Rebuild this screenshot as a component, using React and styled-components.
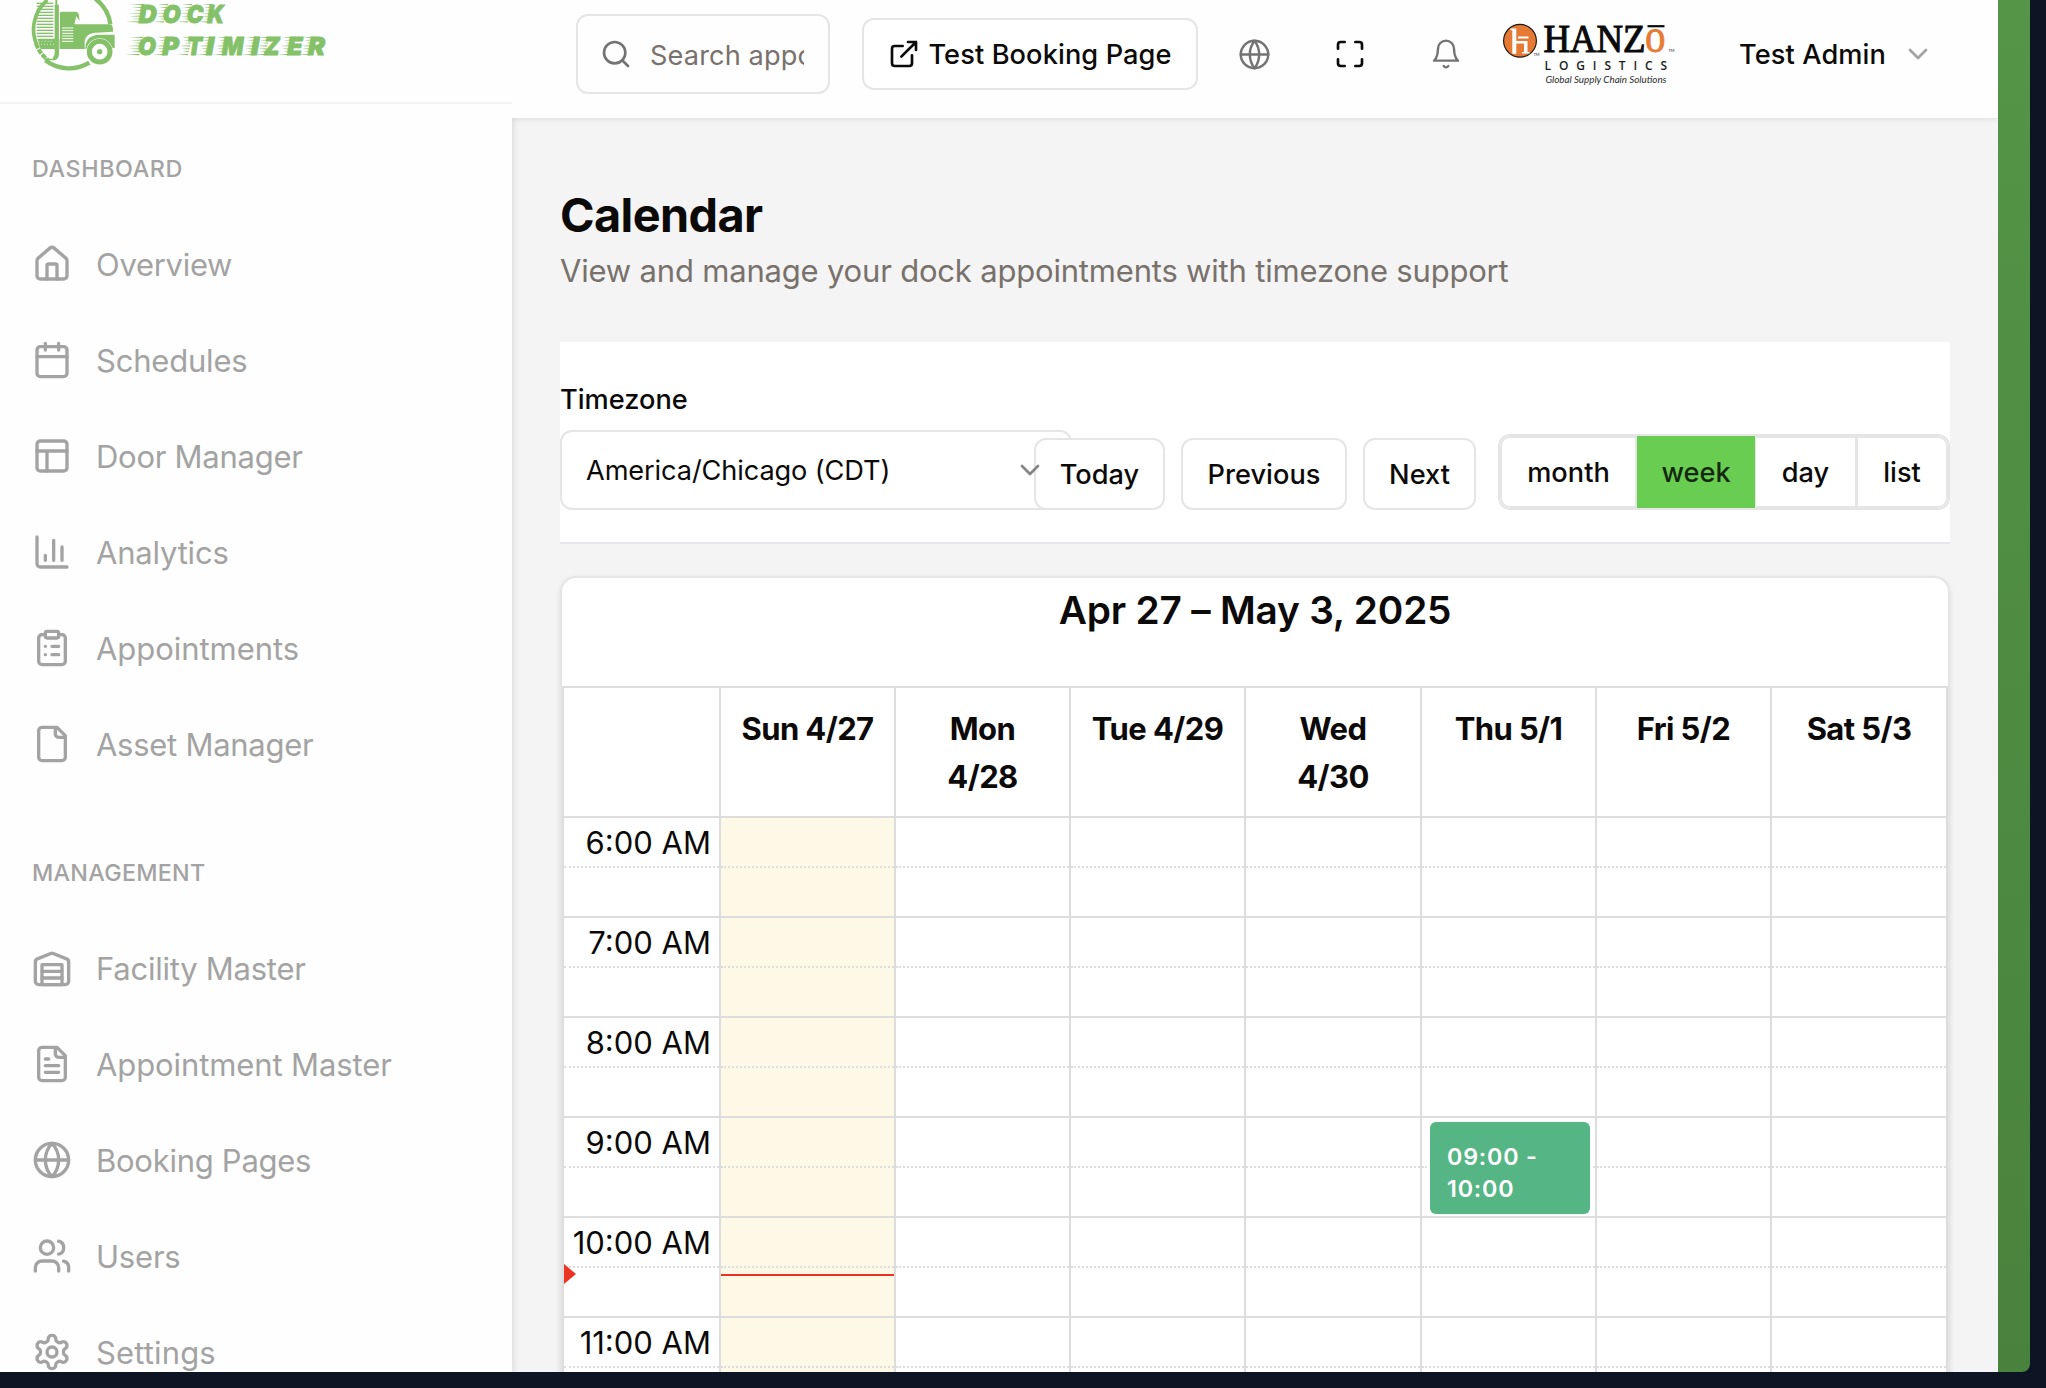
import React from 'react';
import styled, { createGlobalStyle, css } from 'styled-components';

const GlobalStyle = createGlobalStyle`
  *, *::before, *::after { box-sizing: border-box; }
  html, body { margin: 0; padding: 0; overflow: hidden; }
  body { font-family: Inter, "Liberation Sans", sans-serif; color: #0c0a09; background: #0d1423; }
  button, input { font-family: inherit; }
`;

const line = '#dddddd';
const edge = '#e5e5e5';

/* ---------- frame ---------- */

const Desktop = styled.div`
  width: 2046px;
  height: 1388px;
  padding: 0 16px 16px 0;
  background: #0d1423;
`;

const Window = styled.div`
  height: 1372px;
  padding-right: 32px;
  overflow: hidden;
  border-bottom-right-radius: 8px;
  background: linear-gradient(to bottom, #549547, #49823c);
`;

const Shell = styled.div`
  display: flex;
  height: 1372px;
  background: #f4f4f4;
  overflow: hidden;
`;

/* ---------- sidebar ---------- */

const Sidebar = styled.aside`
  flex: 0 0 512px;
  height: 100%;
  background: #fefefe;
  box-shadow: 2px 0 6px rgba(0, 0, 0, 0.1);
  z-index: 1;
`;

const Brand = styled.div`
  height: 104px;
  padding-left: 24px;
  border-bottom: 2px solid #f3f3f3;
`;

const Nav = styled.nav`
  padding-top: 41px;
`;

const SectionLabel = styled.div`
  height: 48px;
  line-height: 48px;
  margin: ${(p) => (p.$spaced ? '57px' : '0')} 0 23px;
  padding-left: 32px;
  font-size: 23.3px;
  font-weight: 500;
  letter-spacing: ${(p) => p.$track}px;
  color: #a3a3a3;
`;

const NavItem = styled.a`
  display: flex;
  align-items: center;
  gap: 24px;
  height: 96px;
  padding-left: 32px;
  color: #a3a3a3;
  font-size: 31px;
  letter-spacing: ${(p) => p.$track}px;
  svg { display: block; }
`;

/* ---------- header ---------- */

const Main = styled.div`
  flex: 1;
  min-width: 0;
  display: flex;
  flex-direction: column;
`;

const Header = styled.header`
  display: flex;
  align-items: center;
  flex: 0 0 118px;
  padding: 0 0 10px 64px;
  background: #fefefe;
  box-shadow: 0 1px 6px rgba(0, 0, 0, 0.1);
  clip-path: inset(0 0 -12px 0);
  position: relative;
  z-index: 2;
`;

const SearchBox = styled.label`
  display: flex;
  align-items: center;
  gap: 18px;
  width: 254px;
  height: 80px;
  padding: 0 24px 0 22px;
  border: 2px solid ${edge};
  border-radius: 12px;
  color: #737373;
  svg { flex: none; }
`;

const SearchText = styled.span`
  flex: 1;
  min-width: 0;
  overflow: hidden;
  white-space: nowrap;
  padding-top: 3px;
  line-height: 40px;
  font-size: 27.2px;
  letter-spacing: 0.1px;
  color: #78716c;
`;

const outlined = css`
  display: flex;
  align-items: center;
  justify-content: center;
  height: 72px;
  padding: 0;
  border: 2px solid ${edge};
  border-radius: 12px;
  background: #fff;
  color: #0c0a09;
  font-size: 27.2px;
  font-weight: 500;
  white-space: nowrap;
`;

const BookingButton = styled.button`
  ${outlined}
  gap: 8px;
  width: 336px;
  margin-left: 32px;
  letter-spacing: 0.1px;
`;

const IconRow = styled.div`
  display: flex;
  gap: 16px;
  margin: 0 16px;
`;

const IconButton = styled.button`
  display: grid;
  place-items: center;
  width: 80px;
  height: 72px;
  padding: 0;
  border: 0;
  background: transparent;
  color: ${(p) => (p.$strong ? '#0c0a09' : '#737373')};
`;

const Account = styled.div`
  display: flex;
  align-items: center;
  gap: 16px;
  margin-left: 63px;
  font-size: 27.2px;
  font-weight: 500;
  letter-spacing: 0.1px;
  white-space: nowrap;
  svg { color: #a3a3a3; }
`;

const AccountName = styled.span`
  width: 147px;
`;

/* ---------- page ---------- */

const Page = styled.main`
  padding: 64px 48px 0;
`;

const PageTitle = styled.h1`
  margin: 0;
  height: 66px;
  line-height: 66px;
  font-size: 46.8px;
  font-weight: 700;
  letter-spacing: -0.6px;
`;

const PageLead = styled.p`
  margin: 0;
  height: 46px;
  line-height: 46px;
  font-size: 31px;
  letter-spacing: -0.19px;
  color: #78716c;
`;

const Toolbar = styled.section`
  display: flex;
  align-items: flex-end;
  height: 202px;
  margin-top: 48px;
  padding-bottom: 32px;
  background: #fff;
  border-bottom: 2px solid #e5e7eb;
`;

const ZoneField = styled.div`
  flex: 0 0 474px;
  min-width: 0;
  width: 474px;
  display: flex;
  flex-direction: column;
  gap: 10px;
`;

const ZoneLabel = styled.label`
  line-height: 40px;
  font-size: 27.2px;
  font-weight: 500;
`;

const ZoneSelect = styled.div`
  display: flex;
  align-items: center;
  justify-content: space-between;
  width: 512px;
  height: 80px;
  padding: 0 24px;
  border: 2px solid ${edge};
  border-radius: 12px;
  background: #fff;
  font-size: 27.2px;
  letter-spacing: -0.12px;
  svg { position: relative; z-index: 1; color: #858585; }
`;

const Pager = styled.div`
  display: flex;
  flex: none;
  gap: 16px;
`;

const PagerButton = styled.button`
  ${outlined}
  flex: none;
  width: ${(p) => p.$w}px;
`;

const ViewSwitch = styled.div`
  display: flex;
  flex: none;
  width: 452px;
  height: 76px;
  margin-left: 22px;
  border: 2px solid ${edge};
  border-radius: 12px;
  overflow: hidden;
`;

const ViewButton = styled.button`
  ${outlined}
  flex: none;
  width: ${(p) => p.$w}px;
  border-radius: ${(p) => (p.$first ? '10px 0 0 10px' : p.$last ? '0 10px 10px 0' : '0')};
  border-left-width: ${(p) => (p.$first || p.$active ? 2 : 1)}px;
  ${(p) => p.$active && css`
    background: #69cd51;
    border-color: #69cd51;
    color: #14290f;
  `}
`;

/* ---------- calendar ---------- */

const CalendarCard = styled.section`
  margin-top: 32px;
  height: 900px;
  border: 2px solid ${edge};
  border-radius: 16px;
  background: #fff;
  box-shadow: 0 2px 5px rgba(0, 0, 0, 0.1);
`;

const RangeTitle = styled.h2`
  margin: 0;
  height: 108px;
  padding-top: 2px;
  line-height: 60px;
  text-align: center;
  font-size: 38.8px;
  font-weight: 600;
  letter-spacing: -0.2px;
`;

const columns = css`
  display: grid;
  grid-template-columns: 155px 175px 175px 175px 176px 175px 175px minmax(0, 1fr);
`;

const Table = styled.div`
  border: solid ${line};
  border-width: 2px 2px 0 2px;
`;

const DayHeads = styled.div`
  ${columns}
  height: 128px;
`;

const DayHead = styled.div`
  padding: 17px 17px 0;
  border-left: 2px solid ${line};
  text-align: center;
  font-size: 31px;
  font-weight: 700;
  line-height: 48px;
  letter-spacing: -0.6px;
`;

const Corner = styled.div``;

const Grid = styled.div`
  ${columns}
`;

const TimeAxis = styled.div`
  position: relative;
`;

const DayColumn = styled.div`
  position: relative;
  border-left: 2px solid ${line};
  background: ${(p) => (p.$today ? '#fef9e6' : 'transparent')};
`;

const Slot = styled.div`
  height: 50px;
  border-top: 2px ${(p) => (p.$half ? 'dotted' : 'solid')} ${line};
  padding-right: 8px;
  line-height: 49px;
  text-align: right;
  white-space: nowrap;
  font-size: 31px;
`;

const NowArrow = styled.div`
  position: absolute;
  left: 0;
  top: 448px;
  border-style: solid;
  border-width: 10px 0 10px 12px;
  border-color: transparent transparent transparent #ea3323;
`;

const NowLine = styled.div`
  position: absolute;
  left: 0;
  right: 0;
  top: 458px;
  height: 2px;
  background: #ea3323;
`;

const Event = styled.div`
  position: absolute;
  left: 8px;
  right: 5px;
  top: 306px;
  height: 92px;
  padding: 19px 17px 0;
  border-radius: 6px;
  background: #55b584;
  box-shadow: 0 0 0 2px #fff;
  color: #fff;
  font-size: 23.3px;
  font-weight: 600;
  line-height: 32px;
  letter-spacing: 0.8px;
`;

/* ---------- icons ---------- */

const Icon = ({ size = 40, width = 2, children, cap = 'round' }) => (
  <svg width={size} height={size} viewBox="0 0 24 24" fill="none" stroke="currentColor"
    strokeWidth={width} strokeLinecap={cap} strokeLinejoin="round">
    {children}
  </svg>
);

const icons = {
  house: <><path d="M15 21v-8a1 1 0 0 0-1-1h-4a1 1 0 0 0-1 1v8" /><path d="M3 10a2 2 0 0 1 .709-1.528l7-5.999a2 2 0 0 1 2.582 0l7 5.999A2 2 0 0 1 21 10v9a2 2 0 0 1-2 2H5a2 2 0 0 1-2-2z" /></>,
  calendar: <><path d="M8 2v4M16 2v4M3 10h18" /><rect width="18" height="18" x="3" y="4" rx="2" /></>,
  layout: <><rect width="18" height="18" x="3" y="3" rx="2" /><path d="M3 9h18M9 21V9" /></>,
  chart: <path d="M3 3v16a2 2 0 0 0 2 2h16M18 17V9M13 17V5M8 17v-3" />,
  clipboard: <><rect width="8" height="4" x="8" y="2" rx="1" /><path d="M16 4h2a2 2 0 0 1 2 2v14a2 2 0 0 1-2 2H6a2 2 0 0 1-2-2V6a2 2 0 0 1 2-2h2M12 11h4M12 16h4M8 11h.01M8 16h.01" /></>,
  file: <path d="M15 2H6a2 2 0 0 0-2 2v16a2 2 0 0 0 2 2h12a2 2 0 0 0 2-2V7ZM14 2v4a2 2 0 0 0 2 2h4" />,
  fileText: <path d="M15 2H6a2 2 0 0 0-2 2v16a2 2 0 0 0 2 2h12a2 2 0 0 0 2-2V7ZM14 2v4a2 2 0 0 0 2 2h4M10 9H8M16 13H8M16 17H8" />,
  warehouse: <><path d="M22 8.35V20a2 2 0 0 1-2 2H4a2 2 0 0 1-2-2V8.35A2 2 0 0 1 3.26 6.5l8-3.2a2 2 0 0 1 1.48 0l8 3.2A2 2 0 0 1 22 8.35ZM6 18h12M6 14h12" /><rect width="12" height="12" x="6" y="10" /></>,
  globe: <><circle cx="12" cy="12" r="10" /><path d="M12 2a14.5 14.5 0 0 0 0 20 14.5 14.5 0 0 0 0-20M2 12h20" /></>,
  users: <><path d="M16 21v-2a4 4 0 0 0-4-4H6a4 4 0 0 0-4 4v2M22 21v-2a4 4 0 0 0-3-3.87M16 3.13a4 4 0 0 1 0 7.75" /><circle cx="9" cy="7" r="4" /></>,
  settings: <><path d="M12.22 2h-.44a2 2 0 0 0-2 2v.18a2 2 0 0 1-1 1.73l-.43.25a2 2 0 0 1-2 0l-.15-.08a2 2 0 0 0-2.73.73l-.22.38a2 2 0 0 0 .73 2.73l.15.1a2 2 0 0 1 1 1.72v.51a2 2 0 0 1-1 1.74l-.15.09a2 2 0 0 0-.73 2.73l.22.38a2 2 0 0 0 2.73.73l.15-.08a2 2 0 0 1 2 0l.43.25a2 2 0 0 1 1 1.73V20a2 2 0 0 0 2 2h.44a2 2 0 0 0 2-2v-.18a2 2 0 0 1 1-1.73l.43-.25a2 2 0 0 1 2 0l.15.08a2 2 0 0 0 2.73-.73l.22-.39a2 2 0 0 0-.73-2.73l-.15-.08a2 2 0 0 1-1-1.74v-.5a2 2 0 0 1 1-1.74l.15-.09a2 2 0 0 0 .73-2.73l-.22-.38a2 2 0 0 0-2.73-.73l-.15.08a2 2 0 0 1-2 0l-.43-.25a2 2 0 0 1-1-1.73V4a2 2 0 0 0-2-2z" /><circle cx="12" cy="12" r="3" /></>,
};

const ChevronDown = () => <Icon size={32}><path d="m6 9 6 6 6-6" /></Icon>;

/* Lettering with tapered speed streaks trailing to the left of every glyph. */
const Streaked = ({ letters, base }) => (
  <g>
    {letters.map(([ch, x, w], i) => (
      <g key={i}>
        {[0, 1, 2, 3, 4, 5, 6].map((n) => {
          const right = x + 16 - n * 2;
          const y = base - 54 + n * 8.6;
          const length = (i ? 32 : 42) - (n % 3) * 7;
          return <path key={n} d={`M${right} ${y - 1.8}v3.6L${right - length} ${y}z`} fill="#84c168" />;
        })}
        <text x={x} y={base} textLength={w} lengthAdjust="spacingAndGlyphs" fontFamily="Inter, sans-serif"
          fontSize="75" fontWeight="900" fontStyle="italic" fill="#84c168" stroke="#84c168" strokeWidth="2.5">{ch}</text>
      </g>
    ))}
  </g>
);

const DockLogo = () => (
  <svg width="310" height="76" viewBox="0 0 930 228" fill="none">
    <path d="M64 181A117 117 0 0 0 196 188" stroke="#84c168" strokeWidth="13" />
    <path d="M42 142A115 115 0 0 1 70 0" stroke="#84c168" strokeWidth="11" />
    <path d="M36 130Q46 160 72 180" stroke="#84c168" strokeWidth="12" strokeDasharray="16 3" />
    <path d="M204 -12Q254 24 259 72" stroke="#84c168" strokeWidth="13" />
    {[10, 19, 28, 37, 46, 55, 64, 73, 82, 91, 100, 109].map((y) => (
      <path key={y} d={`M38 ${y}H88`} stroke="#84c168" strokeWidth="4" />
    ))}
    <path d="M40 116H182V147H50Z" fill="#84c168" />
    <path d="M44 124h44M42 133h48" stroke="#fefefe" strokeWidth="2" strokeDasharray="3 6" />
    <path d="M94 0h6v14h5v150q-3 15-14 17H62v-5h24l6-14V14h2z" fill="#84c168" />
    <path d="M106 12V147" stroke="#fefefe" strokeWidth="2" />
    <path d="M108 38q2-3 8-3h40q8 2 9 12l2 16-10-14-6 24h110q6 2 6 22l-52 3q-34 2-36 38H108Z" fill="#84c168" />
    {[84, 92, 100, 108, 116, 124].map((y) => (
      <path key={y} d={`M114 ${y}H148`} stroke="#fefefe" strokeWidth="3" />
    ))}
    <path d="M184 147Q184 104 228 104H272V144H262Q256 117 226 117Q194 118 188 147Z" fill="#84c168" />
    <circle cx="227" cy="155" r="40" fill="#fefefe" />
    <circle cx="227" cy="155" r="31" stroke="#84c168" strokeWidth="15" />
    <circle cx="227" cy="155" r="8" fill="#84c168" />
    <Streaked base={68} letters={[['D', 344, 54], ['O', 416, 54], ['C', 488, 50], ['K', 550, 50]]} />
    <Streaked base={166} letters={[['O', 342, 54], ['P', 415, 50], ['T', 488, 46], ['I', 546, 24], ['M', 594, 64], ['I', 681, 24], ['Z', 720, 47], ['E', 790, 46], ['R', 852, 51]]} />
  </svg>
);

const HanzoLogo = () => (
  <svg width="174" height="72" viewBox="1502 18 174 72">
    <circle cx="1520" cy="40.8" r="16.4" fill="#e67a35" stroke="#1c1c1c" strokeWidth="1.2" />
    <path d="M1510.5 28.6h5.8v25.200h-4v-23.600h-1.800zM1518 36.500h10.500v2h-10.500zM1516.300 41h11.200v11h2v1.500h-7.500v-1.500h2v-8.500h-7.700z" fill="#fff" />
    <text x="1543.500" y="52.300" textLength="102" lengthAdjust="spacingAndGlyphs" fontFamily="'Liberation Serif', serif" fontSize="40.500" fill="#0a0a0a" stroke="#0a0a0a" strokeWidth="1.100">HANZ</text>
    <text x="1645" y="52.300" textLength="20.500" lengthAdjust="spacingAndGlyphs" fontFamily="'Liberation Serif', serif" fontSize="49" fill="#e67a35" stroke="#e67a35" strokeWidth=".8">o</text>
    <path d="M1647.500 26.200h17" stroke="#0a0a0a" strokeWidth="2.200" />
    <text x="1544.600" y="69.700" textLength="122.500" fontFamily="'Open Sans', sans-serif" fontSize="12" fontWeight="600" fill="#1c1c1c">LOGISTICS</text>
    <text x="1545.500" y="82.700" textLength="121" lengthAdjust="spacingAndGlyphs" fontFamily="Lato, sans-serif" fontSize="9.800" fontStyle="italic" fill="#2a2a2a">Global Supply Chain Solutions</text>
    <text x="1668.500" y="52.300" fontFamily="Lato, sans-serif" fontSize="4" fill="#1c1c1c">TM</text>
    <text x="1533.500" y="56" fontFamily="Lato, sans-serif" fontSize="4" fill="#1c1c1c">TM</text>
  </svg>
);

/* ---------- data ---------- */

const dashboard = [
  ['house', 'Overview', -0.3], ['calendar', 'Schedules', -0.2], ['layout', 'Door Manager', -0.27],
  ['chart', 'Analytics', -0.2], ['clipboard', 'Appointments', -0.05], ['file', 'Asset Manager', -0.27],
];
const management = [
  ['warehouse', 'Facility Master', -0.25], ['fileText', 'Appointment Master', -0.1],
  ['globe', 'Booking Pages', -0.27], ['users', 'Users', -0.2], ['settings', 'Settings', 0.15],
];
const days = ['Sun 4/27', 'Mon 4/28', 'Tue 4/29', 'Wed 4/30', 'Thu 5/1', 'Fri 5/2', 'Sat 5/3'];
const hours = ['6:00 AM', '7:00 AM', '8:00 AM', '9:00 AM', '10:00 AM', '11:00 AM'];

const NavItems = ({ items }) => items.map(([icon, label, track]) => (
  <NavItem key={label} $track={track}><Icon>{icons[icon]}</Icon>{label}</NavItem>
));

export default function App() {
  return (
    <Desktop>
      <GlobalStyle />
      <Window>
        <Shell>
          <Sidebar>
            <Brand><DockLogo /></Brand>
            <Nav>
              <SectionLabel $track={0.6}>DASHBOARD</SectionLabel>
              <NavItems items={dashboard} />
              <SectionLabel $spaced $track={0.28}>MANAGEMENT</SectionLabel>
              <NavItems items={management} />
            </Nav>
          </Sidebar>
          <Main>
            <Header>
              <SearchBox>
                <Icon size={32}><circle cx="11" cy="11" r="8" /><path d="m21 21-4.300-4.300" /></Icon>
                <SearchText>Search appointments...</SearchText>
              </SearchBox>
              <BookingButton>
                <Icon size={32}><path d="M15 3h6v6M10 14 21 3M18 13v6a2 2 0 0 1-2 2H5a2 2 0 0 1-2-2V8a2 2 0 0 1 2-2h6" /></Icon>
                Test Booking Page
              </BookingButton>
              <IconRow>
                <IconButton>
                  <Icon size={33} width={1.8}><circle cx="12" cy="12" r="10" /><path d="M12 2a16.400 16.400 0 0 0 0 20 16.400 16.400 0 0 0 0-20M2 12h20" /></Icon>
                </IconButton>
                <IconButton $strong>
                  <Icon size={32}><path d="M8 3H5a2 2 0 0 0-2 2v3M21 8V5a2 2 0 0 0-2-2h-3M3 16v3a2 2 0 0 0 2 2h3M16 21h3a2 2 0 0 0 2-2v-3" /></Icon>
                </IconButton>
                <IconButton>
                  <Icon size={32} width={1.8}><path d="M18 8A6 6 0 0 0 6 8c0 7-3 9-3 9h18s-3-2-3-9M13.730 21a2 2 0 0 1-3.460 0" /></Icon>
                </IconButton>
              </IconRow>
              <HanzoLogo />
              <Account><AccountName>Test Admin</AccountName><ChevronDown /></Account>
            </Header>
            <Page>
              <PageTitle>Calendar</PageTitle>
              <PageLead>View and manage your dock appointments with timezone support</PageLead>
              <Toolbar>
                <ZoneField>
                  <ZoneLabel>Timezone</ZoneLabel>
                  <ZoneSelect>America/Chicago (CDT)<ChevronDown /></ZoneSelect>
                </ZoneField>
                <Pager>
                  <PagerButton $w={131}>Today</PagerButton>
                  <PagerButton $w={166}>Previous</PagerButton>
                  <PagerButton $w={113}>Next</PagerButton>
                </Pager>
                <ViewSwitch>
                  <ViewButton $w={137} $first>month</ViewButton>
                  <ViewButton $w={118} $active>week</ViewButton>
                  <ViewButton $w={102}>day</ViewButton>
                  <ViewButton $w={91} $last>list</ViewButton>
                </ViewSwitch>
              </Toolbar>
              <CalendarCard>
                <RangeTitle>Apr 27 – May 3, 2025</RangeTitle>
                <Table>
                  <DayHeads>
                    <Corner />
                    {days.map((d) => <DayHead key={d}>{d}</DayHead>)}
                  </DayHeads>
                  <Grid>
                    <TimeAxis>
                      {hours.map((h) => (
                        <React.Fragment key={h}><Slot>{h}</Slot><Slot $half /></React.Fragment>
                      ))}
                      <NowArrow />
                    </TimeAxis>
                    {days.map((d, i) => (
                      <DayColumn key={d} $today={i === 0}>
                        {hours.map((h) => (
                          <React.Fragment key={h}><Slot /><Slot $half /></React.Fragment>
                        ))}
                        {i === 0 && <NowLine />}
                        {i === 4 && <Event>09:00 -<br />10:00</Event>}
                      </DayColumn>
                    ))}
                  </Grid>
                </Table>
              </CalendarCard>
            </Page>
          </Main>
        </Shell>
      </Window>
    </Desktop>
  );
}
